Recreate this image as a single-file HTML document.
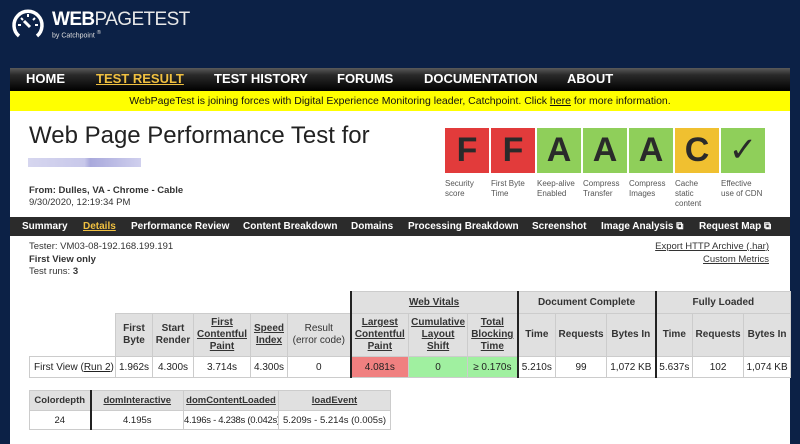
<!DOCTYPE html>
<html><head><style>
*{margin:0;padding:0;box-sizing:border-box}
body{width:800px;height:444px;overflow:hidden;background:#0c2146;font-family:"Liberation Sans",Arial,sans-serif;position:relative;color:#222}
.a{position:absolute}
#nav{left:10px;top:68px;width:780px;height:23px;background:linear-gradient(#5a5a5a,#2a2a2a 30%,#000);}
#nav span{position:absolute;top:3px;color:#fff;font-weight:bold;font-size:13px}
#yel{left:10px;top:91px;width:780px;height:20px;background:#ffff00;font-size:10.5px;text-align:center;line-height:20px;color:#111}
#main{left:10px;top:111px;width:780px;height:333px;background:#fff}
.g{position:absolute;top:128px;width:44px;height:45px;font-weight:bold;font-size:34px;text-align:center;line-height:45px;color:#2a2a2a}
.gl{position:absolute;top:179px;font-size:8px;color:#555;line-height:10px}
#sub{left:10px;top:217px;width:780px;height:19px;background:#2b2b2b}
#sub span{position:absolute;top:4px;color:#fff;font-weight:bold;font-size:10px;white-space:nowrap}
table{border-collapse:collapse;position:absolute;font-size:10px;table-layout:fixed}
td,th{border:1px solid #ccc;text-align:center;padding:0;white-space:nowrap;overflow:hidden}
th{background:#e0e0e0;font-weight:bold;color:#333;line-height:12px}
u{text-decoration:underline}
</style></head><body>
<svg class="a" style="left:11px;top:8px" width="34" height="34" viewBox="0 0 34 34"><path d="M8 28 A14 14 0 1 1 26 28" fill="none" stroke="#fff" stroke-width="3.5"/><path d="M17 6v3M7 17h3M24 17h3M10 10l2 2M24 10l-2 2" stroke="#fff" stroke-width="2"/><path d="M13 13 L19 19" stroke="#fff" stroke-width="3"/></svg>
<div class="a" style="left:52px;top:9px;color:#fff;font-size:19px;letter-spacing:-0.6px"><b>WEB</b><span style="font-weight:normal;color:#e8e8e8">PAGETEST</span></div>
<div class="a" style="left:52px;top:30px;color:#ddd;font-size:7px">by Catchpoint <sup>®</sup></div>
<div id="nav" class="a"><span style="left:16px">HOME</span><span style="left:86px;color:#f0c040;text-decoration:underline">TEST RESULT</span><span style="left:204px">TEST HISTORY</span><span style="left:327px">FORUMS</span><span style="left:414px">DOCUMENTATION</span><span style="left:557px">ABOUT</span></div>
<div id="yel" class="a">WebPageTest is joining forces with Digital Experience Monitoring leader, Catchpoint. Click <u>here</u> for more information.</div>
<div id="main" class="a"></div>
<div class="a" style="left:29px;top:122px;font-size:24px;color:#222">Web Page Performance Test for</div>
<div class="a" style="left:28px;top:158px;width:113px;height:9px;background:linear-gradient(90deg,#d6d6ef,#c8c8ea 50%,#a9a9dc 55%,#d0d0ee)"></div>
<div class="a" style="left:29px;top:185px;font-size:9.5px;font-weight:bold;color:#333">From: Dulles, VA - Chrome - Cable</div>
<div class="a" style="left:29px;top:197px;font-size:9.5px;color:#333">9/30/2020, 12:19:34 PM</div>
<div class="g" style="left:445px;background:#e23b3b">F</div>
<div class="g" style="left:491px;background:#e23b3b">F</div>
<div class="g" style="left:537px;background:#8fcf5a">A</div>
<div class="g" style="left:583px;background:#8fcf5a">A</div>
<div class="g" style="left:629px;background:#8fcf5a">A</div>
<div class="g" style="left:675px;background:#f0c030">C</div>
<div class="g" style="left:721px;background:#8fcf5a;font-weight:normal">✓</div>
<div class="gl" style="left:445px">Security<br>score</div>
<div class="gl" style="left:491px">First Byte<br>Time</div>
<div class="gl" style="left:537px">Keep-alive<br>Enabled</div>
<div class="gl" style="left:583px">Compress<br>Transfer</div>
<div class="gl" style="left:629px">Compress<br>Images</div>
<div class="gl" style="left:675px">Cache<br>static<br>content</div>
<div class="gl" style="left:721px">Effective<br>use of CDN</div>
<div id="sub" class="a"><span style="left:12px">Summary</span><span style="left:73px;color:#f0c040;text-decoration:underline">Details</span><span style="left:121px">Performance Review</span><span style="left:233px">Content Breakdown</span><span style="left:341px">Domains</span><span style="left:398px">Processing Breakdown</span><span style="left:522px">Screenshot</span><span style="left:591px">Image Analysis ⧉</span><span style="left:689px">Request Map ⧉</span></div>
<div class="a" style="left:29px;top:241px;font-size:9.5px;color:#333;line-height:12.5px">Tester: VM03-08-192.168.199.191<br><b>First View only</b><br>Test runs: <b>3</b></div>
<div class="a" style="right:31px;top:241px;font-size:9.5px;color:#333;line-height:12.5px;text-align:right"><u>Export HTTP Archive (.har)</u><br><u>Custom Metrics</u></div>
<table style="left:29px;top:291px;width:761px">
<colgroup><col style="width:86px"><col style="width:37px"><col style="width:41px"><col style="width:57px"><col style="width:37px"><col style="width:63px"><col style="width:58px"><col style="width:59px"><col style="width:50px"><col style="width:38px"><col style="width:51px"><col style="width:49px"><col style="width:37px"><col style="width:51px"><col style="width:47px"></colgroup>
<tr style="height:22px"><td style="border:none"></td><td colspan="5" style="border:none;border-bottom:1px solid #ccc"></td><th colspan="3" style="border-left:2px solid #222"><u>Web Vitals</u></th><th colspan="3" style="border-left:2px solid #222">Document Complete</th><th colspan="3" style="border-left:2px solid #222">Fully Loaded</th></tr>
<tr style="height:43px"><td style="border:none;border-right:1px solid #ccc"></td><th>First<br>Byte</th><th>Start<br>Render</th><th><u>First<br>Contentful<br>Paint</u></th><th><u>Speed<br>Index</u></th><th style="font-weight:normal">Result<br>(error code)</th><th style="border-left:2px solid #222"><u>Largest<br>Contentful<br>Paint</u></th><th><u>Cumulative<br>Layout<br>Shift</u></th><th><u>Total<br>Blocking<br>Time</u></th><th style="border-left:2px solid #222">Time</th><th>Requests</th><th>Bytes In</th><th style="border-left:2px solid #222">Time</th><th>Requests</th><th>Bytes In</th></tr>
<tr style="height:21px"><td style="text-align:left;padding-left:4px">First View (<u>Run 2</u>)</td><td>1.962s</td><td>4.300s</td><td>3.714s</td><td>4.300s</td><td>0</td><td style="background:#f08080;border-left:2px solid #222">4.081s</td><td style="background:#a0f0a0">0</td><td style="background:#a0f0a0">≥ 0.170s</td><td style="border-left:2px solid #222">5.210s</td><td>99</td><td>1,072 KB</td><td style="border-left:2px solid #222">5.637s</td><td>102</td><td>1,074 KB</td></tr>
</table>
<table style="left:29px;top:390px;width:361px;font-size:9.5px">
<colgroup><col style="width:61px"><col style="width:93px"><col style="width:95px"><col style="width:112px"></colgroup>
<tr style="height:20px"><th>Colordepth</th><th style="border-left:2px solid #222"><u>domInteractive</u></th><th><u>domContentLoaded</u></th><th><u>loadEvent</u></th></tr>
<tr style="height:19px"><td>24</td><td style="border-left:2px solid #222">4.195s</td><td style="letter-spacing:-0.3px">4.196s - 4.238s (0.042s)</td><td>5.209s - 5.214s (0.005s)</td></tr>
</table>
</body></html>
